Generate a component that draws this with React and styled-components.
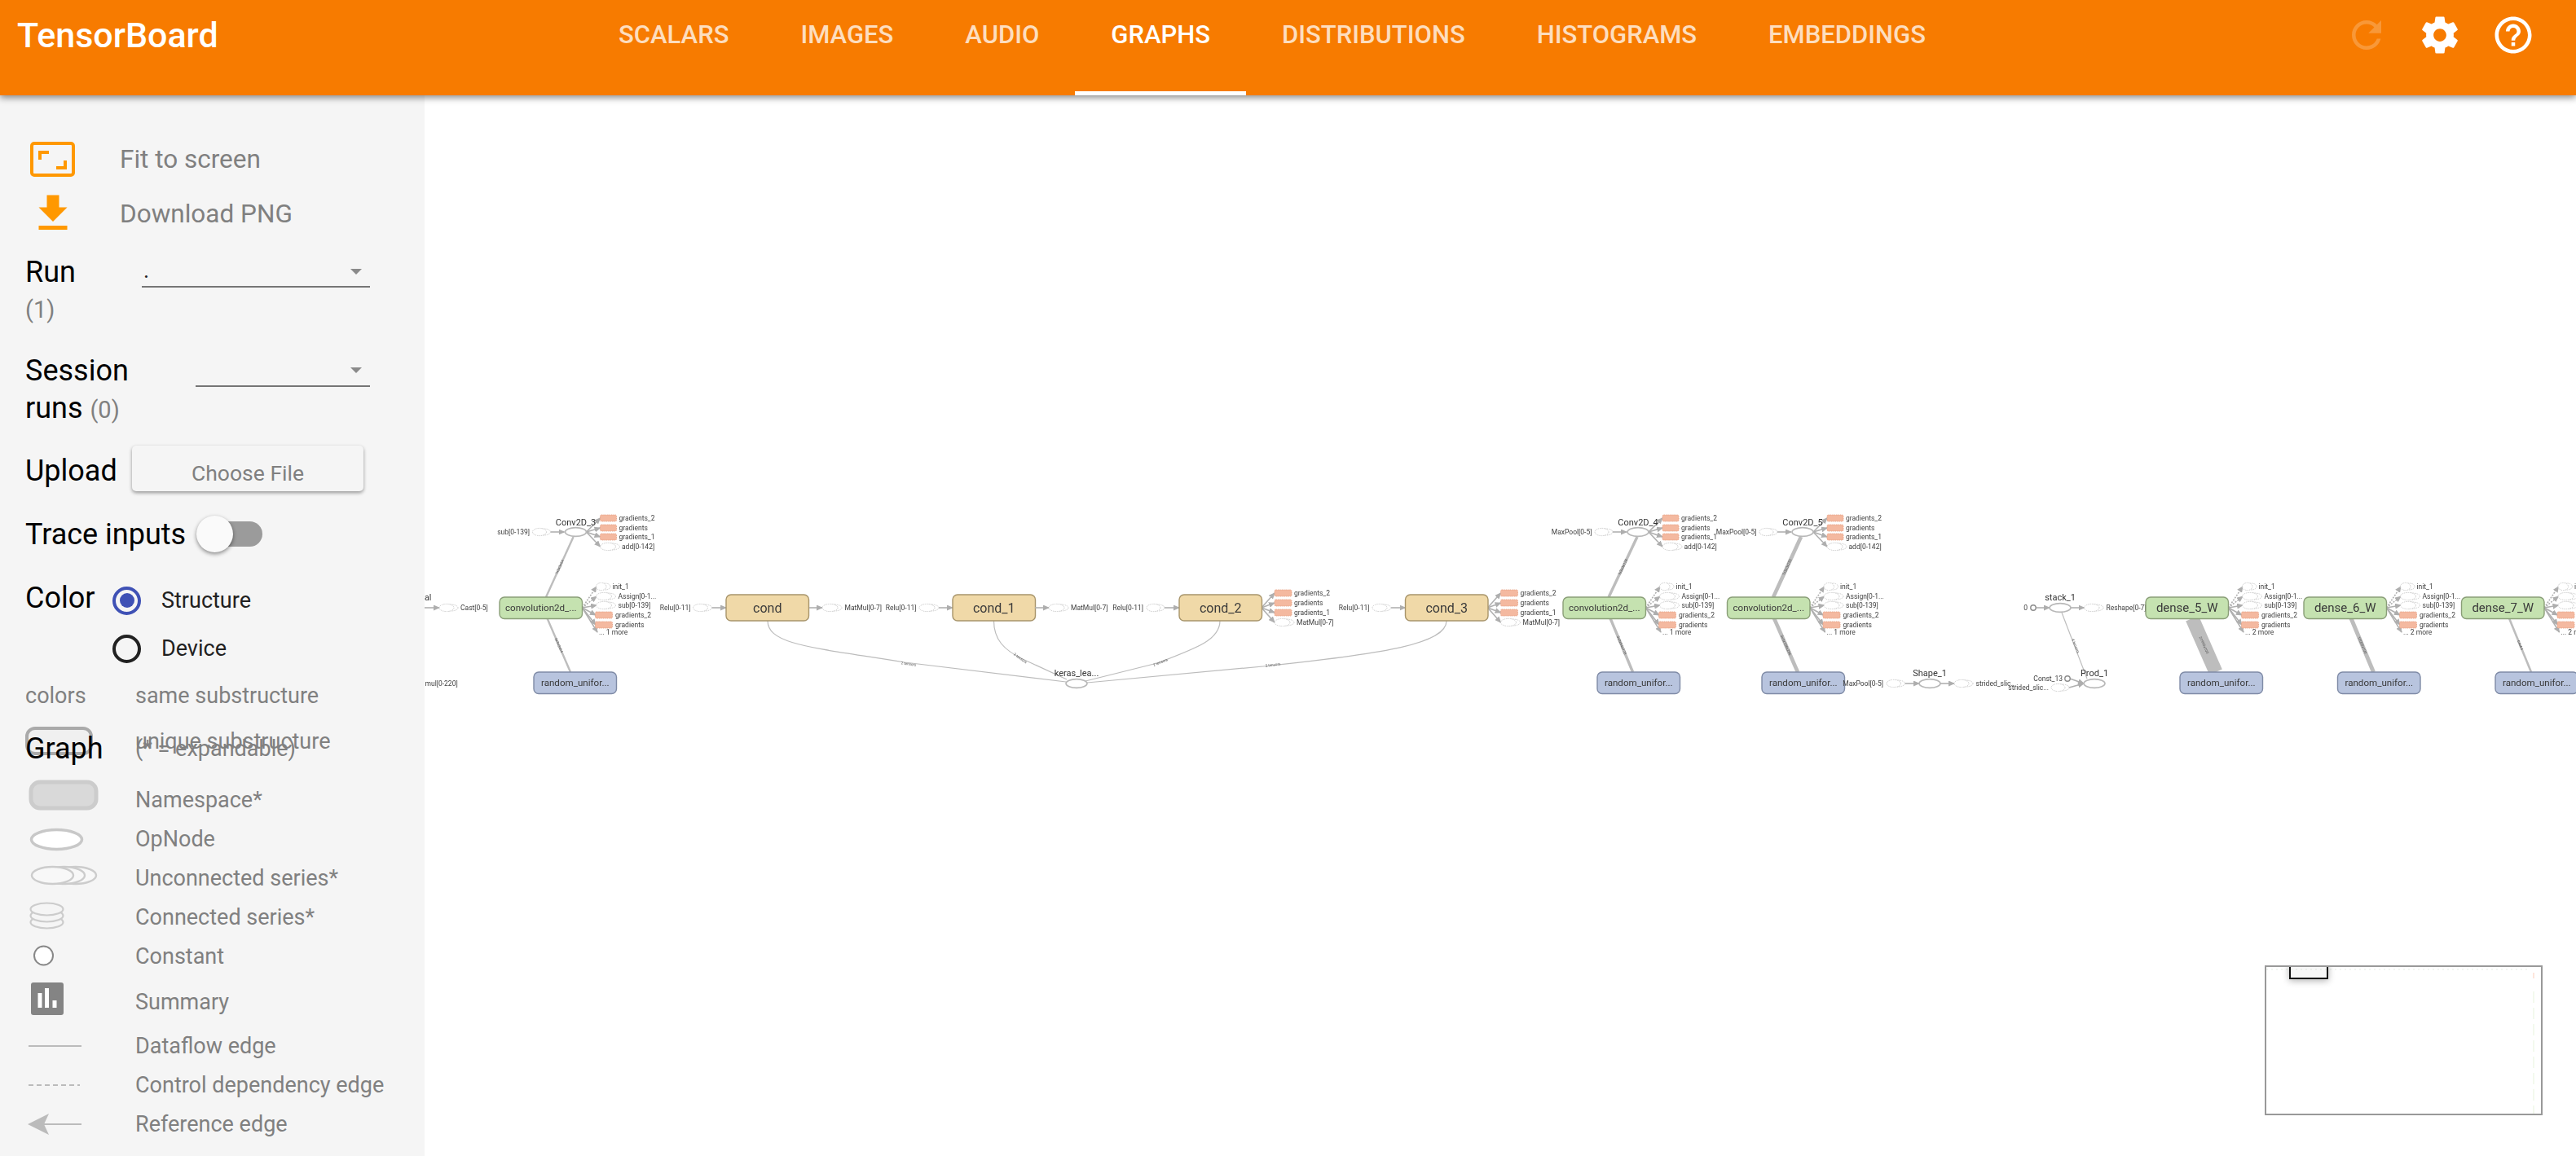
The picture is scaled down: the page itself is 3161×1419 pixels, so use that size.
import React from "react";
import styled, { createGlobalStyle } from "styled-components";

const GlobalStyle = createGlobalStyle`
  html, body {
    margin: 0;
    padding: 0;
    height: 100%;
    overflow: hidden;
    background: #fff;
    font-family: Roboto, "Liberation Sans", sans-serif;
  }
  * { box-sizing: border-box; }
`;

const Page = styled.div`
  width: 3161px;
  height: 1419px;
  display: flex;
  flex-direction: column;
  overflow: hidden;
`;

/* ---- header ---- */
const Header = styled.header`
  height: 117px;
  flex: none;
  display: flex;
  background: #f77b00;
  box-shadow: 0 3px 8px rgba(0, 0, 0, 0.45);
  position: relative;
  z-index: 2;
`;
const Title = styled.div`
  width: 715px;
  padding-left: 21px;
  font-size: 43px;
  font-weight: 500;
  line-height: 86px;
  color: #fff;
`;
const Tabs = styled.nav`
  display: flex;
`;
const Tab = styled.div`
  padding: 0 44px;
  height: 117px;
  line-height: 86px;
  font-size: 31px;
  font-weight: 500;
  color: ${(p) => (p.$active ? "#fff" : "rgba(255, 255, 255, 0.75)")};
  border-bottom: 5px solid ${(p) => (p.$active ? "#fff" : "transparent")};
`;
const HeaderIcons = styled.div`
  margin-left: auto;
  padding-right: 32px;
  display: flex;
`;
const IconButton = styled.div`
  width: 90px;
  height: 86px;
  display: flex;
  align-items: center;
  justify-content: center;
  color: #fff;
  opacity: ${(p) => (p.$dim ? 0.22 : 1)};
  svg { width: 54px; height: 54px; fill: currentColor; display: block; }
`;

/* ---- sidebar ---- */
const Main = styled.div`
  flex: 1;
  display: flex;
  min-height: 0;
`;
const Sidebar = styled.aside`
  width: 521px;
  flex: none;
  background: #f5f5f5;
  padding: 44.5px 0 0 31px;
  color: #000;
`;
const ActionRow = styled.div`
  height: 67px;
  display: flex;
  align-items: center;
  font-size: 31.5px;
  color: #808080;
`;
const ActionIcon = styled.div`
  width: 67px;
  margin-right: 49px;
  display: flex;
  justify-content: center;
  svg { display: block; flex: none; }
`;
const Field = styled.div`
  display: flex;
  align-items: flex-start;
  margin-top: ${(p) => p.$top}px;
`;
const FieldLabel = styled.div`
  width: ${(p) => p.$width}px;
  flex: none;
  font-size: 36px;
  line-height: 46px;
`;
const Count = styled.span`
  color: #808080;
  font-size: 29px;
  display: ${(p) => (p.$block ? "block" : "inline")};
`;
const Select = styled.div`
  width: ${(p) => p.$width}px;
  height: ${(p) => p.$height}px;
  border-bottom: 2px solid #757575;
  padding-left: 2px;
  font-size: 27px;
  line-height: 42px;
  color: #212121;
  display: flex;
  padding-right: 10px;
  &::after {
    content: "";
    width: 0;
    height: 0;
    margin-top: 19px;
    margin-left: auto;
    border-left: 7px solid transparent;
    border-right: 7px solid transparent;
    border-top: 7px solid #8a8a8a;
  }
`;
const FileButton = styled.div`
  width: 284px;
  height: 56px;
  margin-top: -8px;
  padding-top: 12px;
  background: #f5f5f5;
  border-radius: 5px;
  box-shadow: 0 2px 4px rgba(0, 0, 0, 0.4);
  text-align: center;
  font-size: 26.5px;
  line-height: 44px;
  color: #808080;
`;
const Toggle = styled.div`
  width: 81px;
  height: 45px;
  position: relative;
  &::before {
    content: "";
    position: absolute;
    left: 12px;
    right: 0;
    top: 7px;
    height: 31px;
    border-radius: 16px;
    background: #9b9b9b;
  }
  &::after {
    content: "";
    position: absolute;
    left: 0;
    top: 0;
    width: 45px;
    height: 45px;
    border-radius: 50%;
    background: #fafafa;
    box-shadow: 0 2px 5px rgba(0, 0, 0, 0.45);
  }
`;
const RadioGroup = styled.div`
  display: flex;
  flex-direction: column;
`;
const RadioRow = styled.div`
  height: 59px;
  display: flex;
  align-items: center;
  gap: 25px;
  font-size: 27px;
  color: #212121;
`;
const Radio = styled.span`
  width: 35px;
  height: 35px;
  border-radius: 50%;
  border: 4px solid ${(p) => (p.$on ? "#3f51b5" : "#212121")};
  display: flex;
  align-items: center;
  justify-content: center;
  &::after {
    content: "";
    width: 18px;
    height: 18px;
    border-radius: 50%;
    background: ${(p) => (p.$on ? "#3f51b5" : "transparent")};
  }
`;
const ColorLabel = styled(FieldLabel)`
  margin-top: 3px;
`;
const LegendRow = styled.div`
  height: ${(p) => p.$height || 48}px;
  margin-top: ${(p) => p.$top || 0}px;
  display: flex;
  align-items: center;
  font-size: 27px;
  color: #808080;
`;
const LegendKey = styled.div`
  width: 135px;
  flex: none;
  align-self: stretch;
  display: flex;
  align-items: center;
  svg { width: 134px; height: 48px; margin-left: 1px; overflow: visible; display: block; align-self: flex-start; }
`;
const StructureSwatch = styled.div`
  width: 83px;
  height: 35px;
  border: 4px solid #aaaaaa;
  border-radius: 12px;
  background: #f0f0f0;
`;
const GraphHeading = styled.div`
  width: 135px;
  font-size: 36px;
  color: #000;
`;

/* ---- graph canvas ---- */
const Canvas = styled.main`
  flex: 1;
  position: relative;
  background: #fff;
  overflow: hidden;
`;
const GraphSvg = styled.svg`
  display: block;
  width: 2640px;
  height: 1302px;
  font-family: Roboto, "Liberation Sans", sans-serif;
  filter: blur(0.35px);
`;
const Small = styled.text`
  font-size: 8.5px;
  fill: #404040;
  dominant-baseline: central;
`;
const OpTitle = styled.text`
  font-size: 11px;
  fill: #333;
  text-anchor: middle;
  dominant-baseline: central;
`;
const NodeTitle = styled.text`
  font-size: ${(p) => p.$size}px;
  fill: #3a3a3a;
  text-anchor: middle;
  dominant-baseline: central;
`;
const EdgeLabel = styled.text`
  font-size: 4.5px;
  fill: #555;
  text-anchor: middle;
  dominant-baseline: central;
`;
const Minimap = styled.div`
  position: absolute;
  right: 41px;
  bottom: 50px;
  width: 341px;
  height: 184px;
  border: 2px solid #999;
  background: #fff;
  overflow: hidden;
  svg { display: block; position: absolute; inset: 0; }
`;
const MinimapView = styled.div`
  position: absolute;
  left: 28px;
  top: -6px;
  width: 48px;
  height: 21px;
  border: 2px solid #111;
  background: rgba(0, 0, 0, 0.03);
  box-shadow: 0 2px 8px rgba(0, 0, 0, 0.3);
`;

const GREEN = ["#c5e2b0", "#8a9e78"];
const BLUE = ["#b8c4de", "#7f8ba6"];
const SAND = ["#f0d9a8", "#a8956b"];

const Arrow = ({ x1, y1, x2, y2, w = 1.6, dash }) => (
  <line
    x1={x1}
    y1={y1}
    x2={x2}
    y2={y2}
    stroke="#b0b0b0"
    strokeWidth={w}
    strokeDasharray={dash ? "2 1.5" : undefined}
    markerEnd="url(#head)"
  />
);

const Series = ({ x1, x2, y }) => (
  <g fill="#fff" stroke="#c4c4c4" strokeWidth="0.9" strokeDasharray="1.4 1">
    <ellipse cx={(x1 + x2 + 5) / 2} cy={y} rx={(x2 - x1 - 5) / 2} ry={4} />
    <ellipse cx={(x1 + x2 - 5) / 2} cy={y} rx={(x2 - x1 - 5) / 2} ry={4.6} />
  </g>
);

const Grad = ({ x1, x2, y }) => (
  <rect
    x={x1}
    y={y - 4}
    width={x2 - x1}
    height={8}
    rx={1.5}
    fill="#f4b9a0"
    stroke="#e6a387"
    strokeWidth="0.9"
    strokeDasharray="1.4 1"
  />
);

const Op = ({ cx, cy, title, titleY }) => (
  <g>
    <ellipse cx={cx} cy={cy} rx={13} ry={5.4} fill="#fff" stroke="#b8b8b8" strokeWidth="1.6" />
    {title && <OpTitle x={cx} y={titleY}>{title}</OpTitle>}
  </g>
);

const Box = ({ x, y, w = 101.5, h = 26.5, colors, label, size = 11.6 }) => (
  <g>
    <rect x={x} y={y} width={w} height={h} rx={6} fill={colors[0]} stroke={colors[1]} strokeWidth="1.4" />
    <NodeTitle x={x + w / 2} y={y + h / 2} $size={size}>{label}</NodeTitle>
  </g>
);

// small annotation pointing right from a node edge, mini ellipse then label
const InSeries = ({ end, x1, x2, to, y, label }) => (
  <g>
    <Arrow x1={x2} y1={y} x2={to} y2={y} />
    <Series x1={x1} x2={x2} y={y} />
    <Small x={end} y={y} textAnchor="end">{label}</Small>
  </g>
);

// the Conv2D_n op on top with its four outgoing annotations
const ConvOp = ({ ex, title, left }) => (
  <g>
    <InSeries end={ex - 56.5} x1={ex - 53} x2={ex - 31} to={ex - 14} y={653} label={left} />
    {[636, 648, 659, 671].map((y) => (
      <Arrow key={y} x1={ex + 13} y1={653} x2={ex + 30} y2={y} />
    ))}
    <Op cx={ex} cy={653} title={title} titleY={641} />
    {[
      [636, "gradients_2"],
      [648, "gradients"],
      [659, "gradients_1"],
    ].map(([y, t]) => (
      <g key={y}>
        <Grad x1={ex + 30} x2={ex + 50} y={y} />
        <Small x={ex + 53} y={y}>{t}</Small>
      </g>
    ))}
    <Series x1={ex + 30} x2={ex + 54} y={671} />
    <Small x={ex + 56.5} y={671}>add[0-142]</Small>
  </g>
);

// green variable node with the annotation list on its right
const VarNode = ({ x, label, more, size }) => {
  const r = x + 101.5;
  return (
    <g>
      <Arrow x1={r} y1={746} x2={x + 119} y2={720} dash />
      <Arrow x1={r} y1={746} x2={x + 119} y2={732} dash />
      <Arrow x1={r} y1={746} x2={x + 119} y2={743} />
      <Arrow x1={r} y1={746} x2={x + 118} y2={755} />
      <Arrow x1={r} y1={746} x2={x + 118} y2={767} />
      <Arrow x1={r} y1={746} x2={x + 120} y2={776} />
      <Box x={x} y={733} colors={GREEN} label={label} size={size} />
      <Series x1={x + 118.5} x2={x + 136} y={720} />
      <Small x={x + 138.5} y={720}>init_1</Small>
      <Series x1={x + 118.5} x2={x + 142.5} y={732} />
      <Small x={x + 145.5} y={732}>Assign[0-1...</Small>
      <Series x1={x + 118.5} x2={x + 142.5} y={743} />
      <Small x={x + 145.5} y={743}>sub[0-139]</Small>
      <Grad x1={x + 117.5} x2={x + 138.5} y={755} />
      <Small x={x + 142} y={755}>gradients_2</Small>
      <Grad x1={x + 117.5} x2={x + 138.5} y={767} />
      <Small x={x + 142} y={767}>gradients</Small>
      <Small x={x + 122} y={776}>... {more} more</Small>
    </g>
  );
};

const Thick = ({ x1, y1, x2, y2, w, label }) => {
  const a = (Math.atan2(y2 - y1, x2 - x1) * 180) / Math.PI;
  const mx = (x1 + x2) / 2;
  const my = (y1 + y2) / 2;
  return (
    <g>
      <line x1={x1} y1={y1} x2={x2} y2={y2} stroke="#bdbdbd" strokeWidth={w} />
      <EdgeLabel x={mx} y={my} transform={`rotate(${a > 90 ? a - 180 : a} ${mx} ${my})`}>{label}</EdgeLabel>
    </g>
  );
};

const Curve = ({ d }) => <path d={d} fill="none" stroke="#bcbcbc" strokeWidth="1.2" />;

const CondNode = ({ x, label, size = 16 }) => (
  <Box x={x} y={730} h={32} colors={SAND} label={label} size={size} />
);

// cond_2 and cond_3 carry the gradients list
const CondAnnots = ({ x }) => (
  <g>
    {[728, 740, 752, 764].map((y) => (
      <Arrow key={y} x1={x} y1={746} x2={x + 16} y2={y} />
    ))}
    {[
      [728, "gradients_2"],
      [740, "gradients"],
      [752, "gradients_1"],
    ].map(([y, t]) => (
      <g key={y}>
        <Grad x1={x + 16} x2={x + 37} y={y} />
        <Small x={x + 40} y={y}>{t}</Small>
      </g>
    ))}
    <Series x1={x + 16} x2={x + 40} y={764} />
    <Small x={x + 43} y={764}>MatMul[0-7]</Small>
  </g>
);

const Graph = () => (
  <GraphSvg viewBox="521 117 2640 1302">
    <defs>
      <marker id="head" markerUnits="userSpaceOnUse" markerWidth="8" markerHeight="7" refX="7" refY="3.5" orient="auto">
        <path d="M0 0L8 3.5L0 7z" fill="#aeaeae" />
      </marker>
    </defs>

    {/* left edge of the graph */}
    <text x="521" y="733" fontSize="10.5" fill="#333" dominantBaseline="central">al</text>
    <Arrow x1={521} y1={746} x2={539} y2={746} />
    <Series x1={539} x2={562} y={746} />
    <Small x={565} y={746}>Cast[0-5]</Small>
    <Small x={521.5} y={839}>mul[0-220]</Small>

    {/* first conv block */}
    <Thick x1={703.6} y1={659} x2={670} y2={733} w={2.4} label="?x3x3x64" />
    <Thick x1={671.5} y1={759} x2={700} y2={825} w={2.4} label="3x3x3x64" />
    <ConvOp ex={706.5} title="Conv2D_3" left="sub[0-139]" />
    <VarNode x={613} label="convolution2d_..." more={1} />
    <Box x={655} y={825} colors={BLUE} label="random_unifor..." />

    {/* cond nodes and their curves */}
    <Curve d="M942 762C942 792 1000 795 1110 813L1308 837" />
    <Curve d="M1219.5 762C1219.5 785 1232 798 1255 809L1309 834" />
    <Curve d="M1497 762C1497 785 1470 795 1420 814L1332 836" />
    <Curve d="M1775 762C1775 790 1700 802 1560 817L1334 838" />
    <EdgeLabel x={1115} y={815} transform="rotate(8 1115 815)">2 tensors</EdgeLabel>
    <EdgeLabel x={1252} y={808} transform="rotate(35 1252 808)">2 tensors</EdgeLabel>
    <EdgeLabel x={1424} y={813} transform="rotate(-22 1424 813)">2 tensors</EdgeLabel>
    <EdgeLabel x={1562} y={816} transform="rotate(-8 1562 816)">2 tensors</EdgeLabel>

    <InSeries end={847.5} x1={850.5} x2={873.5} to={891} y={746} label="Relu[0-11]" />
    <CondNode x={891} label="cond" />
    <Arrow x1={993} y1={746} x2={1009} y2={746} />
    <Series x1={1009} x2={1033} y={746} />
    <Small x={1036.5} y={746}>MatMul[0-7]</Small>

    <InSeries end={1124.5} x1={1128} x2={1152} to={1169} y={746} label="Relu[0-11]" />
    <CondNode x={1169} label="cond_1" />
    <Arrow x1={1270} y1={746} x2={1287} y2={746} />
    <Series x1={1287} x2={1311} y={746} />
    <Small x={1314} y={746}>MatMul[0-7]</Small>

    <InSeries end={1403} x1={1407} x2={1429} to={1447} y={746} label="Relu[0-11]" />
    <CondAnnots x={1548} />
    <CondNode x={1447} label="cond_2" />

    <InSeries end={1680.5} x1={1684} x2={1707} to={1724.5} y={746} label="Relu[0-11]" />
    <CondAnnots x={1825.5} />
    <CondNode x={1724.5} label="cond_3" />

    <Op cx={1321} cy={839} title="keras_lea..." titleY={826} />

    {/* conv blocks 4 and 5 */}
    <Thick x1={2009} y1={659} x2={1974} y2={733} w={3.4} label="?x3x3x128" />
    <Thick x1={1976} y1={759} x2={2003.6} y2={825} w={3.4} label="3x3x64x128" />
    <ConvOp ex={2010} title="Conv2D_4" left="MaxPool[0-5]" />
    <VarNode x={1918} label="convolution2d_..." more={1} />
    <Box x={1960} y={825} colors={BLUE} label="random_unifor..." />

    <Thick x1={2210} y1={659} x2={2176} y2={733} w={4.6} label="?x3x3x256" />
    <Thick x1={2177} y1={759} x2={2206} y2={825} w={4.6} label="3x3x128x256" />
    <ConvOp ex={2212} title="Conv2D_5" left="MaxPool[0-5]" />
    <VarNode x={2119.5} label="convolution2d_..." more={1} />
    <Box x={2162} y={825} colors={BLUE} label="random_unifor..." />

    {/* shape / stack / prod */}
    <InSeries end={2311} x1={2315} x2={2337.5} to={2355} y={839} label="MaxPool[0-5]" />
    <Arrow x1={2381} y1={839} x2={2398} y2={839} />
    <Op cx={2368} cy={839} title="Shape_1" titleY={826} />
    <Series x1={2398} x2={2421} y={839} />
    <Small x={2424.5} y={839}>strided_slic...</Small>

    <line x1={2530} y1={752} x2={2561} y2={833} stroke="#bdbdbd" strokeWidth="1.2" />
    <EdgeLabel x={2547} y={793} transform="rotate(68 2547 793)">4 tensors</EdgeLabel>
    <Arrow x1={2498.5} y1={746} x2={2515} y2={746} />
    <circle cx={2495} cy={746} r={3.2} fill="#fff" stroke="#8c8c8c" strokeWidth="1.4" />
    <Small x={2488} y={746} textAnchor="end">0</Small>
    <Arrow x1={2541} y1={746} x2={2557.5} y2={746} />
    <Op cx={2528} cy={746} title="stack_1" titleY={733} />
    <Series x1={2557.5} x2={2581} y={746} />
    <Small x={2584.5} y={746}>Reshape[0-7]</Small>

    <Arrow x1={2540} y1={833} x2={2557} y2={839} />
    <Arrow x1={2539} y1={844} x2={2557} y2={839} />
    <Small x={2531} y={833} textAnchor="end">Const_13</Small>
    <circle cx={2537} cy={833} r={3.2} fill="#fff" stroke="#8c8c8c" strokeWidth="1.4" />
    <Small x={2514} y={844} textAnchor="end">strided_slic...</Small>
    <Series x1={2517} x2={2539} y={844} />
    <Op cx={2570} cy={839} title="Prod_1" titleY={826} />

    {/* dense weights */}
    <Thick x1={2690} y1={759} x2={2719} y2={825} w={17} label="21990x100" />
    <VarNode x={2633} label="dense_5_W" more={2} size={15} />
    <Box x={2675} y={825} colors={BLUE} label="random_unifor..." />
    <Thick x1={2885} y1={759} x2={2912.5} y2={825} w={5} label="10000x100" />
    <VarNode x={2827} label="dense_6_W" more={2} size={15} />
    <Box x={2868.5} y={825} colors={BLUE} label="random_unifor..." />
    <Thick x1={3079} y1={759} x2={3106} y2={825} w={2.6} label="64x64" />
    <VarNode x={3020.5} label="dense_7_W" more={2} size={15} />
    <Box x={3062} y={825} colors={BLUE} label="random_unifor..." />
  </GraphSvg>
);

const Legend = () => (
  <>
    <LegendRow $height={40} $top={8}>
      <LegendKey>colors</LegendKey>
      same substructure
    </LegendRow>
    <LegendRow $height={40} $top={16}>
      <LegendKey><StructureSwatch /></LegendKey>
      unique substructure
    </LegendRow>
    <LegendRow $height={46} $top={-34}>
      <GraphHeading>Graph</GraphHeading>
      (* = expandable)
    </LegendRow>
    <LegendRow $top={16}>
      <LegendKey>
        <svg viewBox="0 0 134 48">
          <rect x="6" y="2" width="80" height="32" rx="11" fill="#d9d9d9" stroke="#cccccc" strokeWidth="5" />
        </svg>
      </LegendKey>
      Namespace*
    </LegendRow>
    <LegendRow>
      <LegendKey>
        <svg viewBox="0 0 134 48">
          <ellipse cx="37.5" cy="24.5" rx="31" ry="12" fill="#fff" stroke="#c8c8c8" strokeWidth="3.5" />
        </svg>
      </LegendKey>
      OpNode
    </LegendRow>
    <LegendRow>
      <LegendKey>
        <svg viewBox="0 0 134 48">
          <g fill="#f8f8f8" stroke="#cccccc" strokeWidth="2.4">
            <ellipse cx="60.5" cy="20.5" rx="25.5" ry="10.5" />
            <ellipse cx="46.5" cy="20.5" rx="25.5" ry="10.5" />
            <ellipse cx="32.5" cy="20.5" rx="25.5" ry="10.5" />
          </g>
        </svg>
      </LegendKey>
      Unconnected series*
    </LegendRow>
    <LegendRow>
      <LegendKey>
        <svg viewBox="0 0 134 48">
          <g fill="#f5f5f5" stroke="#cccccc" strokeWidth="2.2">
            <ellipse cx="25.5" cy="30" rx="20" ry="7.5" />
            <ellipse cx="25.5" cy="22" rx="20" ry="7.5" />
            <ellipse cx="25.5" cy="14" rx="20" ry="7.5" />
          </g>
        </svg>
      </LegendKey>
      Connected series*
    </LegendRow>
    <LegendRow>
      <LegendKey>
        <svg viewBox="0 0 134 48">
          <circle cx="21.5" cy="23" r="11.5" fill="#fff" stroke="#888" strokeWidth="2" />
        </svg>
      </LegendKey>
      Constant
    </LegendRow>
    <LegendRow $top={8}>
      <LegendKey>
        <svg viewBox="0 0 134 48">
          <rect x="6" y="0" width="40" height="40" rx="3" fill="#848484" />
          <path d="M14.5 13h5v18h-5zM23 7h5v24h-5zM32.5 22h5v9h-5z" fill="#fff" />
        </svg>
      </LegendKey>
      Summary
    </LegendRow>
    <LegendRow $top={6}>
      <LegendKey>
        <svg viewBox="0 0 134 48">
          <line x1="3" y1="24" x2="68" y2="24" stroke="#bbb" strokeWidth="2" />
        </svg>
      </LegendKey>
      Dataflow edge
    </LegendRow>
    <LegendRow>
      <LegendKey>
        <svg viewBox="0 0 134 48">
          <line x1="3" y1="24" x2="66" y2="24" stroke="#bbb" strokeWidth="2" strokeDasharray="6 4" />
        </svg>
      </LegendKey>
      Control dependency edge
    </LegendRow>
    <LegendRow>
      <LegendKey>
        <svg viewBox="0 0 134 48">
          <line x1="20" y1="24" x2="68" y2="24" stroke="#bbb" strokeWidth="2" />
          <path d="M2 24L28 11L22 24L28 37z" fill="#bbb" />
        </svg>
      </LegendKey>
      Reference edge
    </LegendRow>
  </>
);

const App = () => (
  <Page>
    <GlobalStyle />
    <Header>
      <Title>TensorBoard</Title>
      <Tabs>
        {["SCALARS", "IMAGES", "AUDIO", "GRAPHS", "DISTRIBUTIONS", "HISTOGRAMS", "EMBEDDINGS"].map((t) => (
          <Tab key={t} $active={t === "GRAPHS"}>{t}</Tab>
        ))}
      </Tabs>
      <HeaderIcons>
        <IconButton $dim>
          <svg viewBox="0 0 24 24"><path d="M17.65 6.35C16.2 4.9 14.21 4 12 4c-4.42 0-7.99 3.58-7.99 8s3.57 8 7.99 8c3.73 0 6.84-2.55 7.73-6h-2.08c-.82 2.33-3.04 4-5.65 4-3.31 0-6-2.69-6-6s2.69-6 6-6c1.66 0 3.14.69 4.22 1.78L13 11h7V4l-2.35 2.35z" /></svg>
        </IconButton>
        <IconButton>
          <svg viewBox="0 0 24 24"><path d="M19.43 12.98c.04-.32.07-.64.07-.98s-.03-.66-.07-.98l2.11-1.65c.19-.15.24-.42.12-.64l-2-3.46c-.12-.22-.39-.3-.61-.22l-2.49 1c-.52-.4-1.08-.73-1.69-.98l-.38-2.65C14.46 2.18 14.25 2 14 2h-4c-.25 0-.46.18-.49.42l-.38 2.65c-.61.25-1.17.59-1.69.98l-2.49-1c-.23-.09-.49 0-.61.22l-2 3.46c-.13.22-.07.49.12.64l2.11 1.65c-.04.32-.07.65-.07.98s.03.66.07.98l-2.11 1.65c-.19.15-.24.42-.12.64l2 3.46c.12.22.39.3.61.22l2.49-1c.52.4 1.08.73 1.69.98l.38 2.65c.03.24.24.42.49.42h4c.25 0 .46-.18.49-.42l.38-2.65c.61-.25 1.17-.59 1.69-.98l2.49 1c.23.09.49 0 .61-.22l2-3.46c.12-.22.07-.49-.12-.64l-2.11-1.65zM12 15.5c-1.93 0-3.5-1.57-3.5-3.5s1.57-3.5 3.5-3.5 3.5 1.57 3.5 3.5-1.57 3.5-3.5 3.5z" /></svg>
        </IconButton>
        <IconButton>
          <svg viewBox="0 0 24 24"><path d="M11 18h2v-2h-2v2zm1-16C6.48 2 2 6.48 2 12s4.48 10 10 10 10-4.48 10-10S17.52 2 12 2zm0 18c-4.41 0-8-3.59-8-8s3.59-8 8-8 8 3.59 8 8-3.59 8-8 8zm0-14c-2.21 0-4 1.79-4 4h2c0-1.1.9-2 2-2s2 .9 2 2c0 2-3 1.75-3 5h2c0-2.25 3-2.5 3-5 0-2.21-1.79-4-4-4z" /></svg>
        </IconButton>
      </HeaderIcons>
    </Header>
    <Main>
      <Sidebar>
        <ActionRow>
          <ActionIcon>
            <svg width="55" height="43" viewBox="0 0 55 43" fill="none" stroke="#ff9800" strokeWidth="4">
              <rect x="2" y="2" width="51" height="39" rx="3" />
              <path d="M12 22V13H23M32 32H43V23" />
            </svg>
          </ActionIcon>
          Fit to screen
        </ActionRow>
        <ActionRow>
          <ActionIcon>
            <svg width="60" height="60" viewBox="0 0 24 24" fill="#ff9800">
              <path d="M19 9h-4V3H9v6H5l7 7 7-7zM5 18v2h14v-2H5z" />
            </svg>
          </ActionIcon>
          Download PNG
        </ActionRow>
        <Field $top={15}>
          <FieldLabel $width={143}>
            Run
            <Count $block>(1)</Count>
          </FieldLabel>
          <Select $width={280} $height={42}>.</Select>
        </Field>
        <Field $top={29}>
          <FieldLabel $width={209}>
            Session
            <br />
            runs <Count>(0)</Count>
          </FieldLabel>
          <Select $width={214} $height={43} />
        </Field>
        <Field $top={29}>
          <FieldLabel $width={131}>Upload</FieldLabel>
          <FileButton>Choose File</FileButton>
        </Field>
        <Field $top={30}>
          <FieldLabel $width={210}>Trace inputs</FieldLabel>
          <Toggle />
        </Field>
        <Field $top={29}>
          <ColorLabel $width={107}>Color</ColorLabel>
          <RadioGroup>
            <RadioRow><Radio $on />Structure</RadioRow>
            <RadioRow><Radio />Device</RadioRow>
          </RadioGroup>
        </Field>
        <Legend />
      </Sidebar>
      <Canvas>
        <Graph />
        <Minimap>
          <svg width="337" height="180" viewBox="0 0 337 180">
            <line x1="0" y1="3" x2="320" y2="3" stroke="#eef3ee" strokeWidth="1.5" strokeDasharray="2 4" />
            <rect x="327" y="7" width="2" height="7" fill="#fde6dc" />
            <line x1="328" y1="30" x2="328" y2="180" stroke="#f3f9ee" strokeWidth="2" strokeDasharray="14 6" />
          </svg>
          <MinimapView />
        </Minimap>
      </Canvas>
    </Main>
  </Page>
);

export default App;
